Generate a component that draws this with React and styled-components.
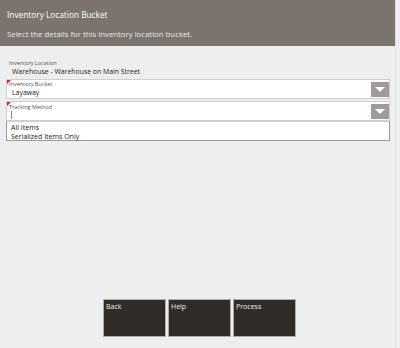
import styled, { createGlobalStyle } from "styled-components";

const GlobalStyle = createGlobalStyle`
  html, body {
    margin: 0;
    padding: 0;
    background: #efeeee;
    font-family: "Open Sans", "Liberation Sans", sans-serif;
  }
`;

function App() {
  return (
    <Page>
      <GlobalStyle />
      <Header>
        <Title>Inventory Location Bucket</Title>
        <Subtitle>Select the details for this inventory location bucket.</Subtitle>
      </Header>
      <Content>
        <ReadOnly>
          <SmallLabel>Inventory Location</SmallLabel>
          <Value>Warehouse - Warehouse on Main Street</Value>
        </ReadOnly>
        <Field>
          <FieldBody>
            <SmallLabel>Inventory Bucket</SmallLabel>
            <Value>Layaway</Value>
          </FieldBody>
          <DropButton>
            <Arrow />
          </DropButton>
        </Field>
        <Field $gap>
          <FieldBody>
            <SmallLabel>Tracking Method</SmallLabel>
            <Caret />
          </FieldBody>
          <DropButton>
            <Arrow />
          </DropButton>
        </Field>
        <List>
          <Option>All Items</Option>
          <Option>Serialized Items Only</Option>
        </List>
      </Content>
      <Footer>
        <ActionButton>Back</ActionButton>
        <ActionButton>Help</ActionButton>
        <ActionButton>Process</ActionButton>
      </Footer>
    </Page>
  );
}

export default App;

const Page = styled.div`
  display: flex;
  flex-direction: column;
  height: 100vh;
  box-sizing: border-box;
  border-right: 1px solid #e2e1e1;
  width: 396px;
`;

const Header = styled.div`
  background: #7b736d;
  height: 46px;
  box-sizing: border-box;
  padding: 9px 7px 0;
  display: flex;
  flex-direction: column;
  gap: 7px;
`;

const Title = styled.div`
  color: #ffffff;
  font-size: 8.3px;
  line-height: 12px;
`;

const Subtitle = styled.div`
  color: #ece8e4;
  font-size: 7.8px;
  line-height: 12px;
`;

const Content = styled.div`
  flex: 1;
  padding: 13px 5px 0 6px;
  display: flex;
  flex-direction: column;
`;

const ReadOnly = styled.div`
  padding: 0 0 0 3px;
  height: 20px;
  display: flex;
  flex-direction: column;
`;

const SmallLabel = styled.div`
  font-size: 5.5px;
  line-height: 8px;
  color: #555;
`;

const Value = styled.div`
  font-size: 6.9px;
  line-height: 10px;
  color: #222;
  padding-left: 3px;
`;

const Field = styled.div`
  position: relative;
  display: flex;
  align-items: center;
  height: 20px;
  margin-top: ${(p) => (p.$gap ? "2px" : "0")};
  background: #fff;
  border: 1px solid #cfcfcf;
  box-sizing: border-box;
  &::before {
    content: "";
    position: absolute;
    left: 0;
    top: 0;
    border-top: 4px solid #e8201c;
    border-right: 4px solid transparent;
  }
`;

const FieldBody = styled.div`
  flex: 1;
  padding-left: 2px;
  display: flex;
  flex-direction: column;
`;

const Caret = styled.div`
  width: 1px;
  height: 8px;
  margin-left: 2px;
  background: #888;
`;

const DropButton = styled.div`
  width: 18px;
  height: 15px;
  background: #9f9b98;
  display: flex;
  align-items: center;
  justify-content: center;
`;

const Arrow = styled.div`
  border-top: 5px solid #fff;
  border-left: 5px solid transparent;
  border-right: 5px solid transparent;
`;

const List = styled.div`
  background: #fff;
  border: 1px solid #9a9a9a;
  border-top: 1px solid #cfcfcf;
  height: 20px;
  box-sizing: border-box;
  padding: 1px 0 0 4px;
  display: flex;
  flex-direction: column;
`;

const Option = styled.div`
  font-size: 7px;
  line-height: 9px;
  color: #222;
`;

const Footer = styled.div`
  display: flex;
  justify-content: center;
  gap: 2px;
  padding: 0 0 11px 4px;
`;

const ActionButton = styled.div`
  width: 63px;
  height: 38px;
  box-sizing: border-box;
  background: #302c28;
  border: 1px solid #b0acaa;
  color: #f0ede8;
  font-size: 7px;
  padding: 2px 2px;
`;
